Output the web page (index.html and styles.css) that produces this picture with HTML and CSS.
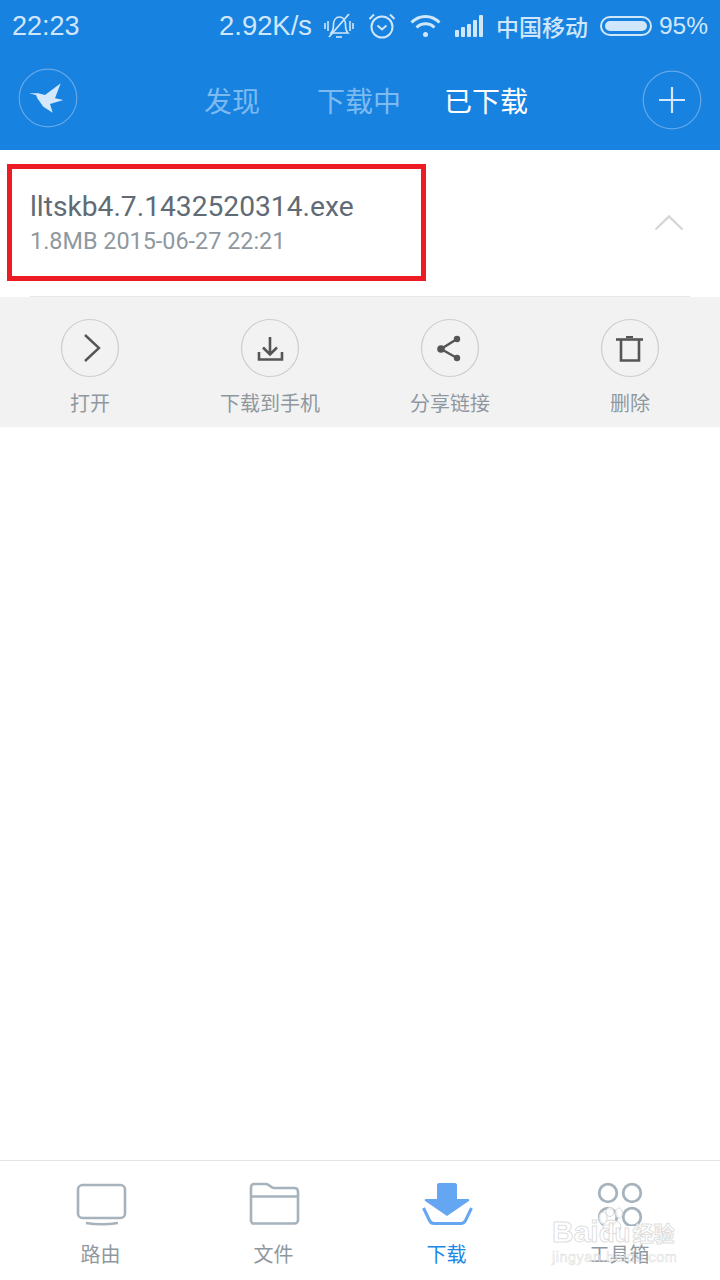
FILE: index.html
```html
<!DOCTYPE html>
<html lang="en">
<head>
  <meta charset="UTF-8">
  <title>已下载</title>
  <link rel="stylesheet" href="styles.css">
</head>
<body>
  <div class="page">
    <header class="top">
      <div class="status">
        <span class="status-time">22:23</span>
        <div class="status-right">
          <span class="status-speed">2.92K/s</span>
          <svg class="ic-bell" width="30" height="26" viewBox="0 0 30 26" fill="none" stroke="#d0e6fb" stroke-width="1.6">
            <path d="M1 10v6M4 8v10M26 8v10M29 10v6"/>
            <path d="M7 20c2-2 2.500-4 2.500-8 0-5 2.500-8 6-8s6 3 6 8c0 4 .5 6 2.500 8z"/>
            <path d="M5 24L25 1" stroke-width="1.800"/>
            <path d="M12 24h6"/>
          </svg>
          <svg class="ic-alarm" width="28" height="26" viewBox="0 0 28 26" fill="none" stroke="#d0e6fb" stroke-width="2">
            <circle cx="14" cy="14" r="10.500"/>
            <path d="M9.500 12.500l4.500 4 4.500-4"/>
            <path d="M1.500 6L6 1.500M26.500 6L22 1.500"/>
          </svg>
          <svg class="ic-wifi" width="31" height="24" viewBox="0 0 31 24" fill="none" stroke="#d0e6fb" stroke-width="2.800">
            <path d="M1.500 8.500c8-8 20-8 28 0"/>
            <path d="M6.500 13.500c5-5 13-5 18 0"/>
            <circle cx="15.500" cy="20.500" r="2.500" fill="#d0e6fb" stroke="none"/>
          </svg>
          <svg class="ic-signal" width="28" height="22" viewBox="0 0 28 22" fill="#d0e6fb">
            <rect x="0" y="15" width="4" height="7" rx="1"/>
            <rect x="6" y="12" width="4" height="10" rx="1"/>
            <rect x="12" y="9" width="4" height="13" rx="1"/>
            <rect x="18" y="5" width="4" height="17" rx="1"/>
            <rect x="24" y="0" width="4" height="22" rx="1"/>
          </svg>
          <span class="status-carrier">中国移动</span>
          <span class="battery"><span class="battery-fill"></span></span>
          <span class="status-pct">95%</span>
        </div>
      </div>
      <nav class="tabbar">
        <svg class="tabbar-logo" width="60" height="60" viewBox="0 0 60 60">
          <circle cx="30" cy="30" r="28.800" fill="none" stroke="#65a9e9" stroke-width="1.200"/>
          <path fill="#d3e8fc" d="M11 25.300l9.300 0 6.700 1.700 15.700-11.700L37 30.300l8.300 1.700L32 36l2.700 8.700-9.400-6-6-8.400L18 27z"/>
        </svg>
        <div class="tabs">
          <span class="tab">发现</span>
          <span class="tab">下载中</span>
          <span class="tab tab-on">已下载</span>
        </div>
        <svg class="tabbar-add" width="60" height="60" viewBox="0 0 60 60">
          <circle cx="30" cy="30" r="28.800" fill="none" stroke="#65a9e9" stroke-width="1.200"/>
          <path d="M17 30h26M30 17v26" stroke="#d3e8fc" stroke-width="2.200" fill="none"/>
        </svg>
      </nav>
    </header>

    <main class="main">
      <div class="file-row">
        <div class="file-info">
          <div class="file-name">lltskb4.7.1432520314.exe</div>
          <div class="file-meta">1.8MB 2015-06-27 22:21</div>
        </div>
        <svg class="file-toggle" width="30" height="18" viewBox="0 0 30 18" fill="none" stroke="#d6d6d6" stroke-width="2.400">
          <path d="M1.500 15.500L15 2.500l13.500 13"/>
        </svg>
        <div class="mark"></div>
      </div>
      <div class="rule"></div>

      <div class="actions">
        <div class="action">
          <svg width="60" height="60" viewBox="0 0 60 60" fill="none">
            <circle cx="30" cy="30" r="28.500" stroke="#cdcdcd" stroke-width="1.200"/>
            <path d="M25 17l14 13-14 13" stroke="#555" stroke-width="2.400"/>
          </svg>
          <span>打开</span>
        </div>
        <div class="action">
          <svg width="60" height="60" viewBox="0 0 60 60" fill="none" stroke="#555" stroke-width="2.600">
            <circle cx="30" cy="30" r="28.500" stroke="#cdcdcd" stroke-width="1.200"/>
            <path d="M30 19v17M23 29.500l7 7 7-7"/>
            <path d="M19 34v7.500h23V34"/>
          </svg>
          <span>下载到手机</span>
        </div>
        <div class="action">
          <svg width="60" height="60" viewBox="0 0 60 60" fill="none">
            <circle cx="30" cy="30" r="28.500" stroke="#cdcdcd" stroke-width="1.200"/>
            <path d="M37 21L21 31l16 9" stroke="#555" stroke-width="2.400"/>
            <circle cx="37" cy="21" r="3.200" fill="#555"/>
            <circle cx="21" cy="31" r="3.800" fill="#555"/>
            <circle cx="37" cy="40" r="3.200" fill="#555"/>
          </svg>
          <span>分享链接</span>
        </div>
        <div class="action">
          <svg width="60" height="60" viewBox="0 0 60 60" fill="none" stroke="#555" stroke-width="2.600">
            <circle cx="30" cy="30" r="28.500" stroke="#cdcdcd" stroke-width="1.200"/>
            <path d="M16 21.500h27"/>
            <path d="M21 22v20.500h18V22" />
            <path d="M26 19h7" stroke-width="2"/>
          </svg>
          <span>删除</span>
        </div>
      </div>
    </main>

    <footer class="bottom">
      <div class="bottom-item">
        <svg width="52" height="44" viewBox="0 0 52 44" fill="none" stroke="#a6b3bd" stroke-width="2.600">
          <rect x="3" y="3" width="47" height="33" rx="4.500"/>
          <path d="M11 41c9 1.500 22 1.500 32 0"/>
        </svg>
        <span>路由</span>
      </div>
      <div class="bottom-item">
        <svg width="52" height="44" viewBox="0 0 52 44" fill="none" stroke="#a6b3bd" stroke-width="2.600">
          <path d="M3 40V5.500C3 3.500 4 2 6 2h12c3 0 5 4 8 4h20c3 0 4 1.500 4 4v28c0 2-1.500 3.500-3.500 3.500h-42C4.500 41.500 3 40 3 38z"/>
          <path d="M3 14.500h47"/>
        </svg>
        <span>文件</span>
      </div>
      <div class="bottom-item bottom-on">
        <svg width="52" height="44" viewBox="0 0 52 44" fill="#65a6f2">
          <path d="M16 3c0-1 1-2 2-2h16c1 0 2 1 2 2v14h11c1.500 0 1.800 1.200.8 2L26 34 4.200 19c-1-.8-.7-2 .8-2h11z"/>
          <path d="M2.500 26l6 12.500c1 2 2.500 3 4.500 3h27c2 0 3.500-1 4.500-3l6-12.500" fill="none" stroke="#65a6f2" stroke-width="3"/>
        </svg>
        <span>下载</span>
      </div>
      <div class="bottom-item">
        <svg width="52" height="44" viewBox="0 0 52 44" fill="none" stroke="#a6b3bd" stroke-width="2.800">
          <circle cx="14" cy="11" r="8.800"/>
          <circle cx="38" cy="11" r="8.800"/>
          <circle cx="14" cy="35" r="8.800"/>
          <circle cx="38" cy="35" r="8.800"/>
        </svg>
        <span>工具箱</span>
      </div>

      <div class="watermark">
        <svg class="watermark-paw" width="30" height="28" viewBox="0 0 30 28" fill="#fff" fill-opacity=".8" stroke="#d8d8d8" stroke-width="1">
          <ellipse cx="5" cy="11" rx="4" ry="6"/>
          <ellipse cx="12" cy="5" rx="4" ry="4.500"/>
          <ellipse cx="21" cy="6" rx="3.500" ry="5"/>
          <ellipse cx="14" cy="20" rx="9" ry="7"/>
        </svg>
        <div class="watermark-logo"><span>Bai</span><span class="watermark-du">du</span><span class="watermark-cn">经验</span></div>
        <div class="watermark-url">jingyan.baidu.com</div>
      </div>
    </footer>
  </div>
</body>
</html>
```

FILE: styles.css
```css
* {
  box-sizing: border-box;
}
body {
  margin: 0;
  font-family: "Noto Sans CJK SC", sans-serif;
  background-color: #ffffff;
}
svg {
  display: block;
  flex: none;
}
.page {
  width: 720px;
  height: 1280px;
  display: flex;
  flex-direction: column;
  overflow: hidden;
}

/* blue top area */
.top {
  height: 150px;
  background-color: #1782e0;
}
.status {
  height: 52px;
  padding: 0 12px;
  display: flex;
  justify-content: space-between;
  align-items: center;
  color: #d0e6fb;
  font-family: "Liberation Sans", sans-serif;
  font-size: 27px;
}
.status-right {
  display: flex;
  align-items: center;
}
.status-speed {
  margin-right: 12px;
  font-size: 27.4px;
}
.ic-alarm {
  margin-left: 14px;
}
.ic-wifi {
  margin-left: 14px;
}
.ic-signal {
  margin-left: 14px;
}
.status-carrier {
  margin-left: 13px;
  font-family: "Noto Sans CJK SC", sans-serif;
  font-size: 23px;
  font-weight: 500;
}
.battery {
  width: 52px;
  height: 20px;
  margin-left: 12px;
  padding: 3px;
  border: 2px solid #d0e6fb;
  border-radius: 10px;
  display: flex;
}
.battery-fill {
  width: 100%;
  background-color: #d0e6fb;
  border-radius: 6px;
}
.status-pct {
  margin-left: 7px;
  font-size: 24.5px;
}
.tabbar {
  height: 98px;
  padding: 0 18px;
  display: flex;
  justify-content: space-between;
  align-items: center;
}
.tabbar-logo {
  margin-bottom: 6px;
}
.tabbar-add {
  margin-bottom: 2px;
}
.tabs {
  display: grid;
  grid-template-columns: repeat(3, 127px);
  margin: 0 2px 2px 0;
  text-align: center;
  font-size: 28px;
  line-height: 40px;
  color: #7dbaf0;
}
.tab-on {
  color: #ffffff;
}

/* list */
.main {
  flex: 1;
}
.file-row {
  position: relative;
  height: 146px;
  padding: 0 36px 0 30px;
  display: flex;
  justify-content: space-between;
  align-items: center;
}
.file-name {
  font-family: Roboto, sans-serif;
  font-size: 28.2px;
  line-height: 36px;
  color: #606b75;
}
.file-meta {
  font-family: Roboto, sans-serif;
  font-size: 23.4px;
  line-height: 32px;
  color: #8f989f;
}
.mark {
  position: absolute;
  left: 7px;
  top: 14px;
  width: 419px;
  height: 117px;
  border: 5px solid #ed1c24;
}
.rule {
  height: 1px;
  margin: 0 30px;
  background-color: #e8e8e8;
}
.actions {
  height: 130px;
  padding-top: 21px;
  background-color: #f2f2f2;
  display: grid;
  grid-template-columns: repeat(4, 180px);
}
.action {
  display: flex;
  flex-direction: column;
  align-items: center;
  gap: 10px;
  font-size: 20px;
  line-height: 30px;
  color: #8f989f;
}

/* bottom tabs */
.bottom {
  position: relative;
  height: 120px;
  padding: 21px 13px 0 14px;
  border-top: 1px solid #e3e3e3;
  display: grid;
  grid-template-columns: repeat(4, 173px);
}
.bottom-item {
  display: flex;
  flex-direction: column;
  align-items: center;
  gap: 13px;
  font-size: 20px;
  line-height: 30px;
  color: #8f989f;
}
.bottom-on {
  color: #1b87e6;
}
.watermark {
  position: absolute;
  left: 552px;
  top: 58px;
  width: 130px;
  color: #ffffff;
  font-family: "Liberation Sans", sans-serif;
}
.watermark-paw {
  position: absolute;
  left: 46px;
  top: -12px;
}
.watermark-logo {
  position: relative;
  display: flex;
  align-items: center;
  height: 26px;
  white-space: nowrap;
  font-size: 30px;
  font-weight: bold;
  color: rgba(255, 255, 255, 0.8);
  -webkit-text-stroke: 1px rgba(170, 170, 170, 0.4);
}
.watermark-du {
  font-size: 26px;
  margin-top: 2px;
}
.watermark-cn {
  margin-left: 2px;
  font-family: "Noto Sans CJK SC", sans-serif;
  font-size: 21px;
  line-height: 26px;
}
.watermark-url {
  position: relative;
  margin-top: 3px;
  white-space: nowrap;
  font-size: 14.5px;
  line-height: 18px;
  letter-spacing: 0.5px;
  color: rgba(255, 255, 255, 0.7);
  -webkit-text-stroke: 0.6px rgba(170, 170, 170, 0.4);
}
```
